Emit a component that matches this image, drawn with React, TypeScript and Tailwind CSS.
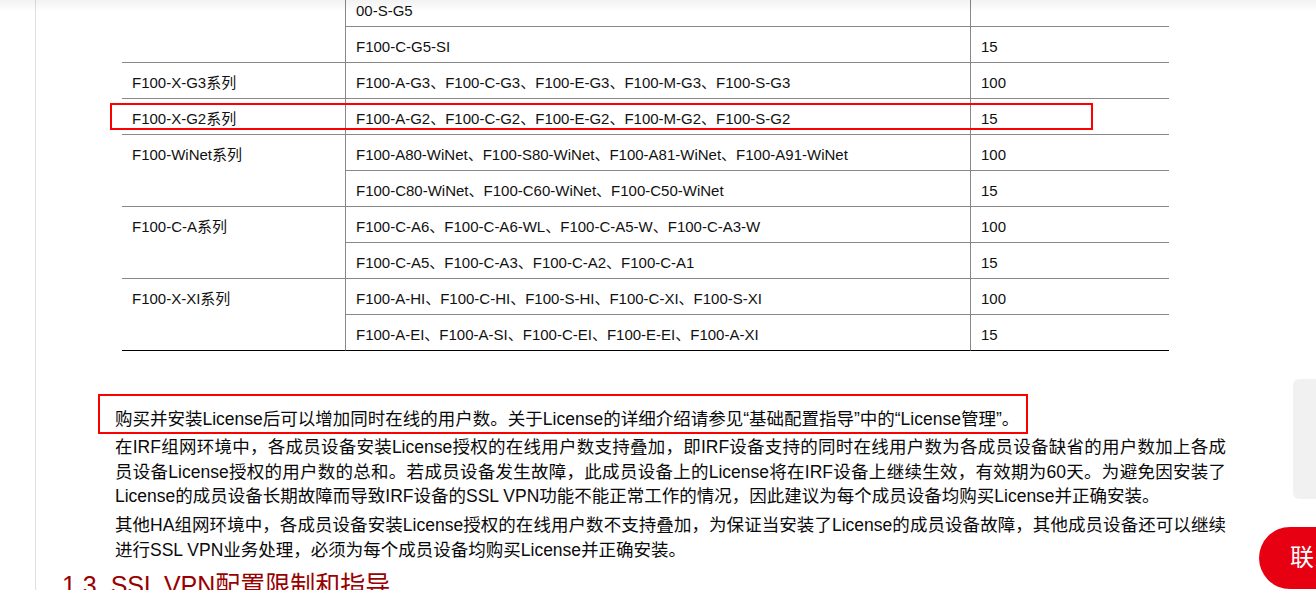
import React from 'react'

interface Row {
  model: string
  users: string
}

interface Group {
  name: string
  rows: Row[]
}

// 表格可见部分（G5 系列上半截在视口外）
const groups: Group[] = [
  {
    name: '',
    rows: [
      { model: '00-S-G5', users: '' },
      { model: 'F100-C-G5-SI', users: '15' },
    ],
  },
  {
    name: 'F100-X-G3系列',
    rows: [{ model: 'F100-A-G3、F100-C-G3、F100-E-G3、F100-M-G3、F100-S-G3', users: '100' }],
  },
  {
    name: 'F100-X-G2系列',
    rows: [{ model: 'F100-A-G2、F100-C-G2、F100-E-G2、F100-M-G2、F100-S-G2', users: '15' }],
  },
  {
    name: 'F100-WiNet系列',
    rows: [
      { model: 'F100-A80-WiNet、F100-S80-WiNet、F100-A81-WiNet、F100-A91-WiNet', users: '100' },
      { model: 'F100-C80-WiNet、F100-C60-WiNet、F100-C50-WiNet', users: '15' },
    ],
  },
  {
    name: 'F100-C-A系列',
    rows: [
      { model: 'F100-C-A6、F100-C-A6-WL、F100-C-A5-W、F100-C-A3-W', users: '100' },
      { model: 'F100-C-A5、F100-C-A3、F100-C-A2、F100-C-A1', users: '15' },
    ],
  },
  {
    name: 'F100-X-XI系列',
    rows: [
      { model: 'F100-A-HI、F100-C-HI、F100-S-HI、F100-C-XI、F100-S-XI', users: '100' },
      { model: 'F100-A-EI、F100-A-SI、F100-C-EI、F100-E-EI、F100-A-XI', users: '15' },
    ],
  },
]

const spanClass: Record<number, string> = {
  1: 'row-span-1',
  2: 'row-span-2',
}

function LicenseTable() {
  return (
    <div className="relative ml-[86px] w-[1047px]">
      <div className="grid grid-cols-[224px_625px_198px] grid-rows-[27px_repeat(9,36px)] text-[15px] leading-[21px] text-[#111]">
        {groups.map((group, gi) => {
          const last = gi === groups.length - 1
          return (
            <React.Fragment key={gi}>
              <div
                className={`${spanClass[group.rows.length]} border-r border-b pl-[10px] pt-[9px] ${
                  last ? 'border-b-black border-r-[#888]' : 'border-[#888]'
                }`}
              >
                {group.name}
              </div>
              {group.rows.map((row, ri) => {
                const lastRow = last && ri === group.rows.length - 1
                const first = gi === 0 && ri === 0
                return (
                  <React.Fragment key={ri}>
                    <div
                      className={`border-r border-b pl-[10px] whitespace-nowrap ${first ? 'pt-0' : 'pt-[9px]'} ${
                        lastRow ? 'border-b-black border-r-[#888]' : 'border-[#888]'
                      }`}
                    >
                      {row.model}
                    </div>
                    <div
                      className={`border-b pl-[10px] ${first ? 'pt-0' : 'pt-[9px]'} ${
                        lastRow ? 'border-black' : 'border-[#888]'
                      }`}
                    >
                      {row.users}
                    </div>
                  </React.Fragment>
                )
              })}
            </React.Fragment>
          )
        })}
      </div>
      {/* 标注框 */}
      <div className="pointer-events-none absolute left-[-12px] top-[103px] h-[27px] w-[983px] border-2 border-[#ff0000]" />
    </div>
  )
}

function Notes() {
  const full = 'block whitespace-nowrap text-justify [text-align-last:justify]'
  return (
    <div className="relative ml-[79px] mt-[56px] w-[1111px] text-[17.5px] leading-[24.5px] text-[#0a0a0a]">
      <p>购买并安装License后可以增加同时在线的用户数。关于License的详细介绍请参见“基础配置指导”中的“License管理”。</p>
      <p className="mt-[3.5px]">
        <span className={full}>
          在IRF组网环境中，各成员设备安装License授权的在线用户数支持叠加，即IRF设备支持的同时在线用户数为各成员设备缺省的用户数加上各成
        </span>
        <span className={full}>
          员设备License授权的用户数的总和。若成员设备发生故障，此成员设备上的License将在IRF设备上继续生效，有效期为60天。为避免因安装了
        </span>
        <span className="block whitespace-nowrap">
          License的成员设备长期故障而导致IRF设备的SSL VPN功能不能正常工作的情况，因此建议为每个成员设备均购买License并正确安装。
        </span>
      </p>
      <p className="mt-[4.5px]">
        <span className={full}>
          其他HA组网环境中，各成员设备安装License授权的在线用户数不支持叠加，为保证当安装了License的成员设备故障，其他成员设备还可以继续
        </span>
        <span className="block whitespace-nowrap">进行SSL VPN业务处理，必须为每个成员设备均购买License并正确安装。</span>
      </p>
      {/* 标注框 */}
      <div className="pointer-events-none absolute left-[-17px] top-[-13px] h-[40px] w-[930px] border-2 border-[#ff0000]" />
    </div>
  )
}

export default function App() {
  return (
    <div className="relative h-[590px] overflow-hidden bg-white font-['Liberation_Sans','Noto_Sans_CJK_SC',sans-serif]">
      <div className="ml-[35px] h-full border-l border-[#e0e0e0]">
        <LicenseTable />
        <Notes />
        <h2 className="ml-[26px] mt-[5px] whitespace-nowrap text-[25px] leading-[36px] text-[#990000]">
          1.3&nbsp; SSL VPN配置限制和指导
        </h2>
      </div>

      {/* 顶部导航阴影 */}
      <div className="pointer-events-none absolute left-0 right-0 top-0 h-[12px] bg-linear-to-b from-black/5 to-transparent" />

      {/* 右侧悬浮栏 */}
      <div className="absolute right-0 top-[379px] h-[120px] w-[23px] rounded-l-md bg-[#f1f1f1]" />
      <div className="absolute right-0 top-[527px] flex h-[62px] w-[57px] items-center overflow-hidden rounded-l-full bg-[#e60012] pl-[31px] text-[24px] whitespace-nowrap text-white">
        联系我们
      </div>
    </div>
  )
}
